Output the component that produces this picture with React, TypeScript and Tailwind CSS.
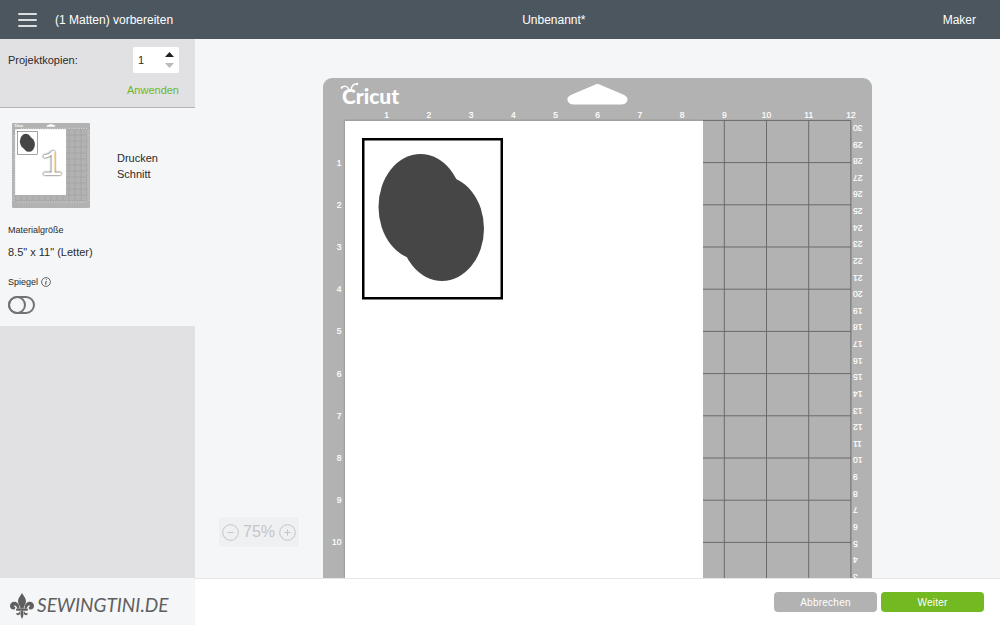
import { useState } from 'react';

const UNIT = 42.2;
const ORIGIN_X = 21.5;
const ORIGIN_Y = 42.4;
const INCHES = Array.from({ length: 12 }, (_, i) => i + 1);
const ROW_LABELS = INCHES.slice(0, 10);
const CENTIMETRES = Array.from({ length: 28 }, (_, i) => 30 - i);

function Mat({ className, labelled = true }: { className: string; labelled?: boolean }) {
  const right = ORIGIN_X + 12 * UNIT;
  const bottom = ORIGIN_Y + 12 * UNIT;
  return (
    <svg viewBox="0 0 549 598" className={className} role="img" aria-label="Schneidematte">
      <rect width="549" height="598" rx="9" fill="#b2b2b2" />
      <path d="M273 6.3Q274.500 5.700 276 6.300L299.500 16.300C304.500 18.500 305.500 21 303.800 23.800Q302.300 26.500 298.500 26.500H250.500Q246.700 26.500 245.200 23.800C243.500 21 244.500 18.500 249.500 16.300Z" fill="#fff" />
      <text x="19" y="26" fill="#fff" fontSize="21" fontWeight="900" className="font-[Lato,sans-serif]">Cricut</text>
      <path d="M26 12C25 8 21 7 18.500 10M28 12C28.500 8 31 5 34.500 5.800" fill="none" stroke="#fff" strokeWidth="1.500" strokeLinecap="round" />
      <circle cx="34" cy="6" r="1.200" fill="#fff" />
      <circle cx="18.800" cy="9.500" r="1.100" fill="#fff" />
      <g stroke={labelled ? '#6a6a6a' : '#999'} strokeWidth={labelled ? 1 : 3}>
        {[0, ...INCHES].map((n) => (
          <path key={n} d={`M${ORIGIN_X + n * UNIT} ${ORIGIN_Y}V${bottom}M${ORIGIN_X} ${ORIGIN_Y + n * UNIT}H${right}`} />
        ))}
      </g>
      <path d={`M${ORIGIN_X} 506V${ORIGIN_Y}H380`} fill="none" stroke="#a0a0a0" strokeWidth="1.500" />
      <rect x="22" y="43" width="358" height="464" fill="#fff" />
      <rect x="40.250" y="61.250" width="138.500" height="159" fill="#fff" stroke="#000" strokeWidth="2.500" />
      <g fill="#464646">
        <ellipse cx="97.500" cy="129" rx="42" ry="53" />
        <ellipse cx="119" cy="150.500" rx="42" ry="52.500" />
      </g>
      {labelled ? (
        <g fill="#fff" stroke="#fff" strokeWidth=".2" fontSize="8.500" className="font-['Liberation_Sans',sans-serif]">
          {INCHES.map((n) => (
            <text key={n} x={ORIGIN_X + n * UNIT} y="40" textAnchor="middle">{n}</text>
          ))}
          {ROW_LABELS.map((n) => (
            <text key={n} x="18.500" y={ORIGIN_Y + n * UNIT + 3} textAnchor="end">{n}</text>
          ))}
          {CENTIMETRES.map((n, i) => (
            <text key={n} textAnchor="end" transform={`translate(530 ${47 + i * 16.620}) rotate(180)`}>{n}</text>
          ))}
        </g>
      ) : (
        <path d="M40 556H528M535 50V548M62 38H528M15 85V548" fill="none" stroke="#ddd" strokeWidth="7" strokeDasharray="7 10" />
      )}
    </svg>
  );
}

function FleurDeLis() {
  return (
    <svg viewBox="0 0 24 26" className="h-[26px] w-6 shrink-0 fill-[#5f5f5f]" aria-hidden="true">
      <path d="M12 0C10.500 3 8 5 8 8.500C8 11 10 12.500 10.500 15.500H13.500C14 12.500 16 11 16 8.500C16 5 13.500 3 12 0Z" />
      <path d="M9.500 15.500C9.500 11 7 8.800 4.300 8.800C1.800 8.800 0 10.800 0 13C0 15.200 1.500 16.600 3.300 16.600C4.500 16.600 5.300 15.800 5.300 14.800C5.300 13.900 4.500 13.500 3.800 13.600C3.800 12 6.500 11.600 7.300 15.500Z" />
      <path d="M14.500 15.500C14.500 11 17 8.800 19.700 8.800C22.200 8.800 24 10.800 24 13C24 15.200 22.500 16.600 20.700 16.600C19.500 16.600 18.700 15.800 18.700 14.800C18.700 13.900 19.500 13.500 20.200 13.600C20.200 12 17.500 11.600 16.700 15.500Z" />
      <rect x="6" y="15.500" width="12" height="2.200" rx="1" />
      <path d="M10.600 18H13.400C13.400 20 14 22.500 12 26C10 22.500 10.600 20 10.600 18Z" />
      <path d="M9.700 18C9.500 20 8 20.500 6 20.200C6.500 22.500 9 23 10.300 20.500ZM14.300 18C14.500 20 16 20.500 18 20.200C17.500 22.500 15 23 13.700 20.500Z" />
    </svg>
  );
}

export default function App() {
  const [copies, setCopies] = useState(1);
  const [mirrored, setMirrored] = useState(false);
  const [zoom, setZoom] = useState(75);

  return (
    <div className="flex h-screen flex-col bg-[#f5f6f8] font-['Liberation_Sans',Arial,sans-serif] text-[11px] text-[#2b2b2b]">
      <header className="flex h-[39px] shrink-0 items-center bg-[#4b565f] pr-6 pl-[18px] text-xs text-white">
        <button type="button" aria-label="Menü" className="mr-[18px] flex w-[19px] flex-col gap-1">
          <span className="h-0.5 w-full rounded-full bg-white/80" />
          <span className="h-0.5 w-full rounded-full bg-white/80" />
          <span className="h-0.5 w-full rounded-full bg-white/80" />
        </button>
        <span>(1 Matten) vorbereiten</span>
        <h1 className="flex-1 pr-2 text-center">Unbenannt*</h1>
        <span>Maker</span>
      </header>

      <div className="flex min-h-0 flex-1">
        <aside className="w-[195px] shrink-0 overflow-hidden bg-[#e1e1e3]">
          <div className="flex flex-col gap-2 border-b border-[#b4b4b6] px-2 pt-2 pb-2">
            <div className="flex items-center justify-between pr-2">
              <label htmlFor="copies">Projektkopien:</label>
              <div className="flex h-[26px] w-[46px] items-center rounded-xs bg-white px-[5px]">
                <input
                  id="copies"
                  inputMode="numeric"
                  value={copies}
                  onChange={(e) => setCopies(Number(e.target.value) || 1)}
                  className="w-0 min-w-0 flex-1 bg-transparent outline-none"
                />
                <div className="flex flex-col gap-1.5">
                  <button type="button" aria-label="Mehr Kopien" onClick={() => setCopies(copies + 1)}>
                    <svg viewBox="0 0 9 5" className="block h-[5px] w-[9px] fill-[#222]"><path d="M4.500 0L9 5H0Z" /></svg>
                  </button>
                  <button type="button" aria-label="Weniger Kopien" onClick={() => setCopies(Math.max(1, copies - 1))}>
                    <svg viewBox="0 0 9 5" className="block h-[5px] w-[9px] fill-[#bbb]"><path d="M0 0H9L4.500 5Z" /></svg>
                  </button>
                </div>
              </div>
            </div>
            <button type="button" className="mr-2 self-end leading-[18px] text-[#6fb71e]">Anwenden</button>
          </div>

          <section className="flex flex-col bg-[#f5f6f8] px-2 pt-[15px] pb-3">
            <div className="flex items-center gap-[27px] pl-1">
              <div className="relative shrink-0">
                <Mat className="block h-[85px] w-[78px]" labelled={false} />
                <span className="absolute top-[23px] left-[29px] font-['Liberation_Mono',monospace] text-4xl text-white [text-shadow:0_0_2px_#555,0_0_2px_#666]">1</span>
              </div>
              <p className="leading-4">Drucken<br />Schnitt</p>
            </div>
            <h2 className="mt-4 text-[9px] leading-3">Materialgröße</h2>
            <p className="mt-2 leading-4">8.5" x 11" (Letter)</p>
            <div className="mt-4 flex items-center gap-[3px] text-[9px] leading-3">
              <label htmlFor="mirror">Spiegel</label>
              <svg viewBox="0 0 10 10" className="size-2.5" fill="none" stroke="#444" aria-hidden="true">
                <circle cx="5" cy="5" r="4.400" strokeWidth=".8" />
                <path d="M5.200 4L4.600 7.500M5.400 2.300L5.300 3" strokeWidth="1" />
              </svg>
            </div>
            <label className="relative mt-2 flex h-[18px] w-[27px] cursor-pointer">
              <input
                id="mirror"
                type="checkbox"
                checked={mirrored}
                onChange={(e) => setMirrored(e.target.checked)}
                className="peer h-full w-full appearance-none rounded-full border-2 border-[#737373]"
              />
              <span className="absolute top-0 left-0 size-[18px] rounded-full border-2 border-[#737373] peer-checked:left-[9px]" />
            </label>
          </section>
        </aside>

        <main className="relative flex min-w-0 flex-1 items-start justify-center overflow-hidden pt-[39px]">
          <Mat className="block w-full max-w-[549px] shrink-0" />
          <div className="absolute bottom-[31px] left-6 flex h-[30px] w-20 items-center justify-between rounded-sm bg-[#eff0f2] px-[3px] text-[#c3c5c9]">
            <button type="button" aria-label="Verkleinern" onClick={() => setZoom(zoom - 25)}>
              <svg viewBox="0 0 17 17" className="block size-[17px]" fill="none" stroke="currentColor">
                <circle cx="8.500" cy="8.500" r="7.800" /><path d="M5.500 8.500H11.500" />
              </svg>
            </button>
            <output className="text-base">{zoom}%</output>
            <button type="button" aria-label="Vergrößern" onClick={() => setZoom(zoom + 25)}>
              <svg viewBox="0 0 17 17" className="block size-[17px]" fill="none" stroke="currentColor">
                <circle cx="8.500" cy="8.500" r="7.800" /><path d="M5.500 8.500H11.500M8.500 5.500V11.500" />
              </svg>
            </button>
          </div>
        </main>
      </div>

      <footer className="flex h-[47px] shrink-0">
        <div className="flex w-[195px] shrink-0 items-center gap-[3px] pt-2 pl-2.5">
          <FleurDeLis />
          <span className="font-[Lato,sans-serif] text-[19px] text-[#5f5f5f] italic">SEWINGTINI.DE</span>
        </div>
        <div className="flex flex-1 items-center justify-end gap-1 border-t border-[#e6e7e9] bg-white pr-4 text-[10px] tracking-wide text-white">
          <button type="button" className="h-5 w-[103px] rounded-sm bg-[#b2b2b2]">Abbrechen</button>
          <button type="button" className="h-5 w-[103px] rounded-sm bg-[#72b922]">Weiter</button>
        </div>
      </footer>
    </div>
  );
}
